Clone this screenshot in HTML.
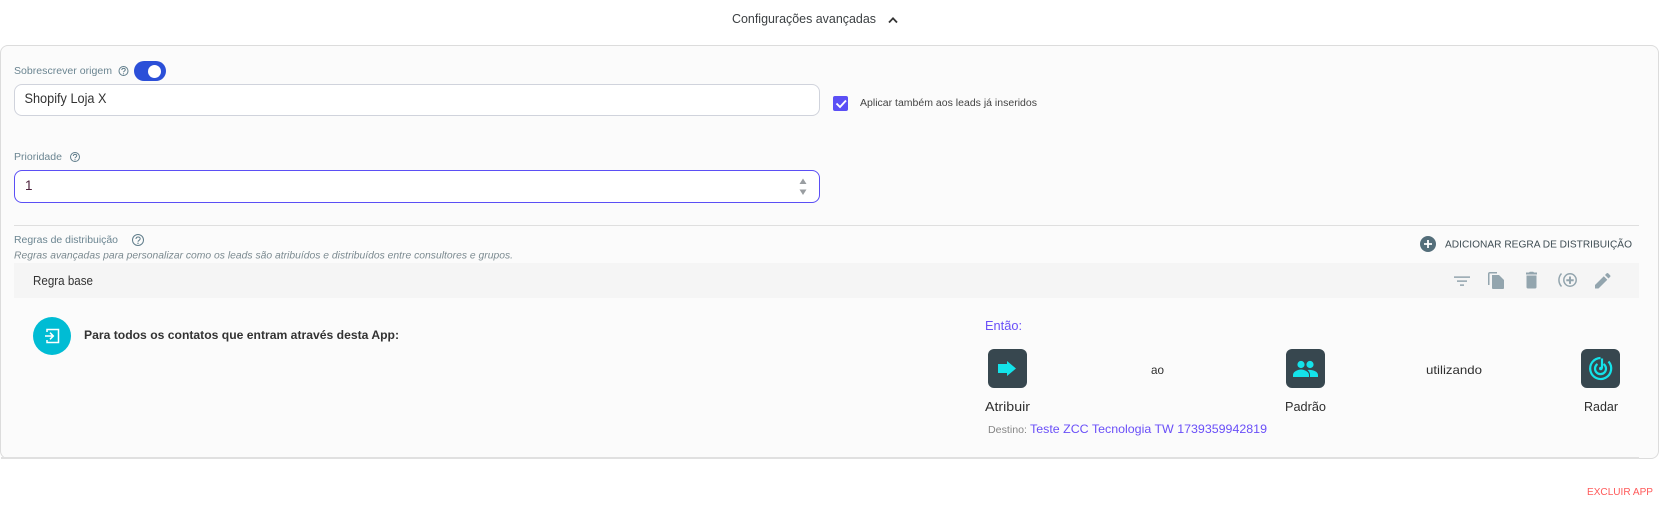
<!DOCTYPE html>
<html lang="pt-BR"><head><meta charset="utf-8"><title>Configurações avançadas</title>
<style>
html,body{margin:0;padding:0;width:1671px;height:510px;overflow:hidden;background:#fff}
body{position:relative;font-family:"Liberation Sans",sans-serif}
.b{position:absolute;box-sizing:border-box}
svg{position:absolute;left:0;top:0}
text{font-family:"Liberation Sans",sans-serif}
</style></head><body>
<div class="b" style="left:0;top:45px;width:1659px;height:414px;background:#fbfbfb;border:1px solid #dcdcdc;border-radius:8px"></div>
<div class="b" style="left:14px;top:84px;width:806px;height:32px;background:#fff;border:1px solid #d0d3dc;border-radius:8px"></div>
<div class="b" style="left:14px;top:170px;width:806px;height:33px;background:#fff;border:1.5px solid #5b4ff5;border-radius:8px"></div>
<div class="b" style="left:14px;top:225px;width:1625px;height:1px;background:#dfdfdf"></div>
<div class="b" style="left:14px;top:263px;width:1625px;height:35px;background:#f5f5f5"></div>
<div class="b" style="left:1px;top:457px;width:1638px;height:2px;background:#e0e0e0"></div>
<div class="b" style="left:134px;top:61px;width:32px;height:20px;background:#2b4fd8;border-radius:10px"></div>
<div class="b" style="left:148px;top:65px;width:13px;height:13px;background:#fff;border-radius:50%"></div>
<div class="b" style="left:833px;top:96px;width:15px;height:15px;background:#5b4ff5;border-radius:2px"></div>
<div class="b" style="left:33px;top:317px;width:38px;height:38px;background:#00bcd4;border-radius:50%"></div>
<div class="b" style="left:988px;top:349px;width:39px;height:39px;background:#37474f;border-radius:6px"></div>
<div class="b" style="left:1286px;top:349px;width:39px;height:39px;background:#37474f;border-radius:6px"></div>
<div class="b" style="left:1581px;top:349px;width:39px;height:39px;background:#37474f;border-radius:6px"></div>
<svg width="1671" height="510" viewBox="0 0 1671 510" xmlns="http://www.w3.org/2000/svg">
<g fill="#3c4043">
<text x="732" y="23" font-size="12.500" textLength="144" lengthAdjust="spacingAndGlyphs">Configurações avançadas</text>
</g>
<path d="M889 22.500l4-4.200 4 4.200" fill="none" stroke="#333" stroke-width="1.800"/>
<g fill="#6b8591">
<text x="14" y="74" font-size="10" textLength="98" lengthAdjust="spacingAndGlyphs">Sobrescrever origem</text>
<text x="14" y="160" font-size="10" textLength="48" lengthAdjust="spacingAndGlyphs">Prioridade</text>
<text x="14" y="243" font-size="10" textLength="104" lengthAdjust="spacingAndGlyphs">Regras de distribuição</text>
</g>
<text x="14" y="258.500" font-size="10" font-style="italic" fill="#7b8a90" textLength="499" lengthAdjust="spacingAndGlyphs">Regras avançadas para personalizar como os leads são atribuídos e distribuídos entre consultores e grupos.</text>
<g fill="none" stroke="#607d8b" stroke-width="1">
<circle cx="123.500" cy="71" r="4.500"/><circle cx="75" cy="157" r="4.500"/><circle cx="138" cy="240" r="5.500"/>
<path d="M121.800 70c0-2.200 3.500-2.200 3.500-.2 0 1.300-1.800 1.300-1.800 2.500M73.300 156c0-2.200 3.500-2.200 3.500-.2 0 1.300-1.800 1.300-1.800 2.500M136 239c0-2.700 4.200-2.700 4.200-.2 0 1.500-2.200 1.500-2.200 3"/>
</g>
<g fill="#607d8b"><circle cx="123.500" cy="73.800" r=".6"/><circle cx="75" cy="159.800" r=".6"/><circle cx="138" cy="243.300" r=".7"/></g>
<text x="24.500" y="103" font-size="14" fill="#333" textLength="82" lengthAdjust="spacingAndGlyphs">Shopify Loja X</text>
<text x="25" y="190" font-size="13.500" fill="#4a1f3a">1</text>
<path d="M836.500 103.500l3.500 3.500 6-6.500" fill="none" stroke="#fff" stroke-width="1.900"/>
<text x="860" y="106" font-size="10" fill="#444" textLength="177" lengthAdjust="spacingAndGlyphs">Aplicar também aos leads já inseridos</text>
<path d="M799.500 184l3.500-5.500 3.500 5.500zM799.500 189.500l3.500 5.500 3.500-5.500z" fill="#999da1"/>
<circle cx="1428" cy="244" r="8" fill="#546e7a"/>
<path d="M1424 244h8M1428 240v8" stroke="#fff" stroke-width="1.800"/>
<text x="1445" y="247.500" font-size="10.500" fill="#3d4b52" textLength="187" lengthAdjust="spacingAndGlyphs">ADICIONAR REGRA DE DISTRIBUIÇÃO</text>
<text x="33" y="285" font-size="12.500" fill="#333" textLength="60" lengthAdjust="spacingAndGlyphs">Regra base</text>
<g fill="#93a5ae">
<path d="M1454 276.400h16v1.500h-16zM1457 280.400h10v1.500h-10zM1460 284.400h4v1.500h-4z"/>
<path d="M1488 274a2 2 0 0 1 2-2h7v1.500h-7.500V285H1488z"/>
<path d="M1492 275h7l5 5v8a1 1 0 0 1-1 1h-10a1 1 0 0 1-1-1z"/>
<path d="M1526.500 275.500h10V287a1.500 1.500 0 0 1-1.500 1.500h-7a1.500 1.500 0 0 1-1.500-1.500zM1526 272.500h3l.8-.8h3.400l.8.800h3v2h-11z"/>
<path d="M1569 276.500h2v2.700h2.700v2h-2.700v2.700h-2v-2.700h-2.700v-2h2.700z"/>
<path d="M1595 285v3.500h3.500l8.800-8.800-3.500-3.500zM1605 275l3.500 3.500 1.700-1.700a1 1 0 0 0 0-1.400l-2.100-2.100a1 1 0 0 0-1.400 0z"/>
</g>
<g fill="none" stroke="#93a5ae" stroke-width="1.500"><circle cx="1570" cy="280" r="6.200"/><path d="M1561.500 273.500a9.500 9.500 0 0 0 0 13"/></g>
<g fill="none" stroke="#fff" stroke-width="1.500"><path d="M47 332v-2.500h11.500v13H47V340"/><path d="M45 336h8M50 332.700l3.300 3.300-3.300 3.300"/></g>
<text x="84" y="339" font-size="12" font-weight="bold" fill="#333" textLength="315" lengthAdjust="spacingAndGlyphs">Para todos os contatos que entram através desta App:</text>
<text x="985" y="330" font-size="12.500" fill="#6a4ff8" textLength="37" lengthAdjust="spacingAndGlyphs">Então:</text>
<path d="M998 364h9v-3l9 7.500-9 7.500v-3h-9z" fill="#14e3ea"/>
<g fill="#14e3ea"><circle cx="1301" cy="364.500" r="3.600"/><circle cx="1310" cy="364.500" r="3.600"/><path d="M1293 377v-2c0-3.500 5-5.500 8-5.500s8 2 8 5.500v2zM1310 377v-2c0-2-1-3.800-2.500-5 4-.8 10.500 1 10.500 5v2z"/></g>
<g fill="none" stroke="#14e3ea" stroke-width="2.200"><path d="M1600.500 358A10.500 10.500 0 1 0 1608.500 361.500"/><path d="M1597.500 364A5.500 5.500 0 1 0 1603.500 364"/><path d="M1602 358.500V368.500"/></g>
<circle cx="1600.800" cy="368.500" r="1.800" fill="#14e3ea"/>
<g fill="#2f2f2f" font-size="12">
<text x="1151" y="374" textLength="13" lengthAdjust="spacingAndGlyphs">ao</text>
<text x="1426" y="374" textLength="56" lengthAdjust="spacingAndGlyphs">utilizando</text>
</g>
<g fill="#2f2f2f" font-size="13">
<text x="985" y="411" textLength="45" lengthAdjust="spacingAndGlyphs">Atribuir</text>
<text x="1285" y="411" textLength="41" lengthAdjust="spacingAndGlyphs">Padrão</text>
<text x="1584" y="411" textLength="34" lengthAdjust="spacingAndGlyphs">Radar</text>
</g>
<text x="988" y="433" font-size="10" fill="#858585" textLength="39" lengthAdjust="spacingAndGlyphs">Destino:</text>
<text x="1030" y="433" font-size="12" fill="#6a4ff8" textLength="237" lengthAdjust="spacingAndGlyphs">Teste ZCC Tecnologia TW 1739359942819</text>
<text x="1587" y="495" font-size="10.500" fill="#ff5a5a" textLength="66" lengthAdjust="spacingAndGlyphs">EXCLUIR APP</text>
</svg>
</body></html>
